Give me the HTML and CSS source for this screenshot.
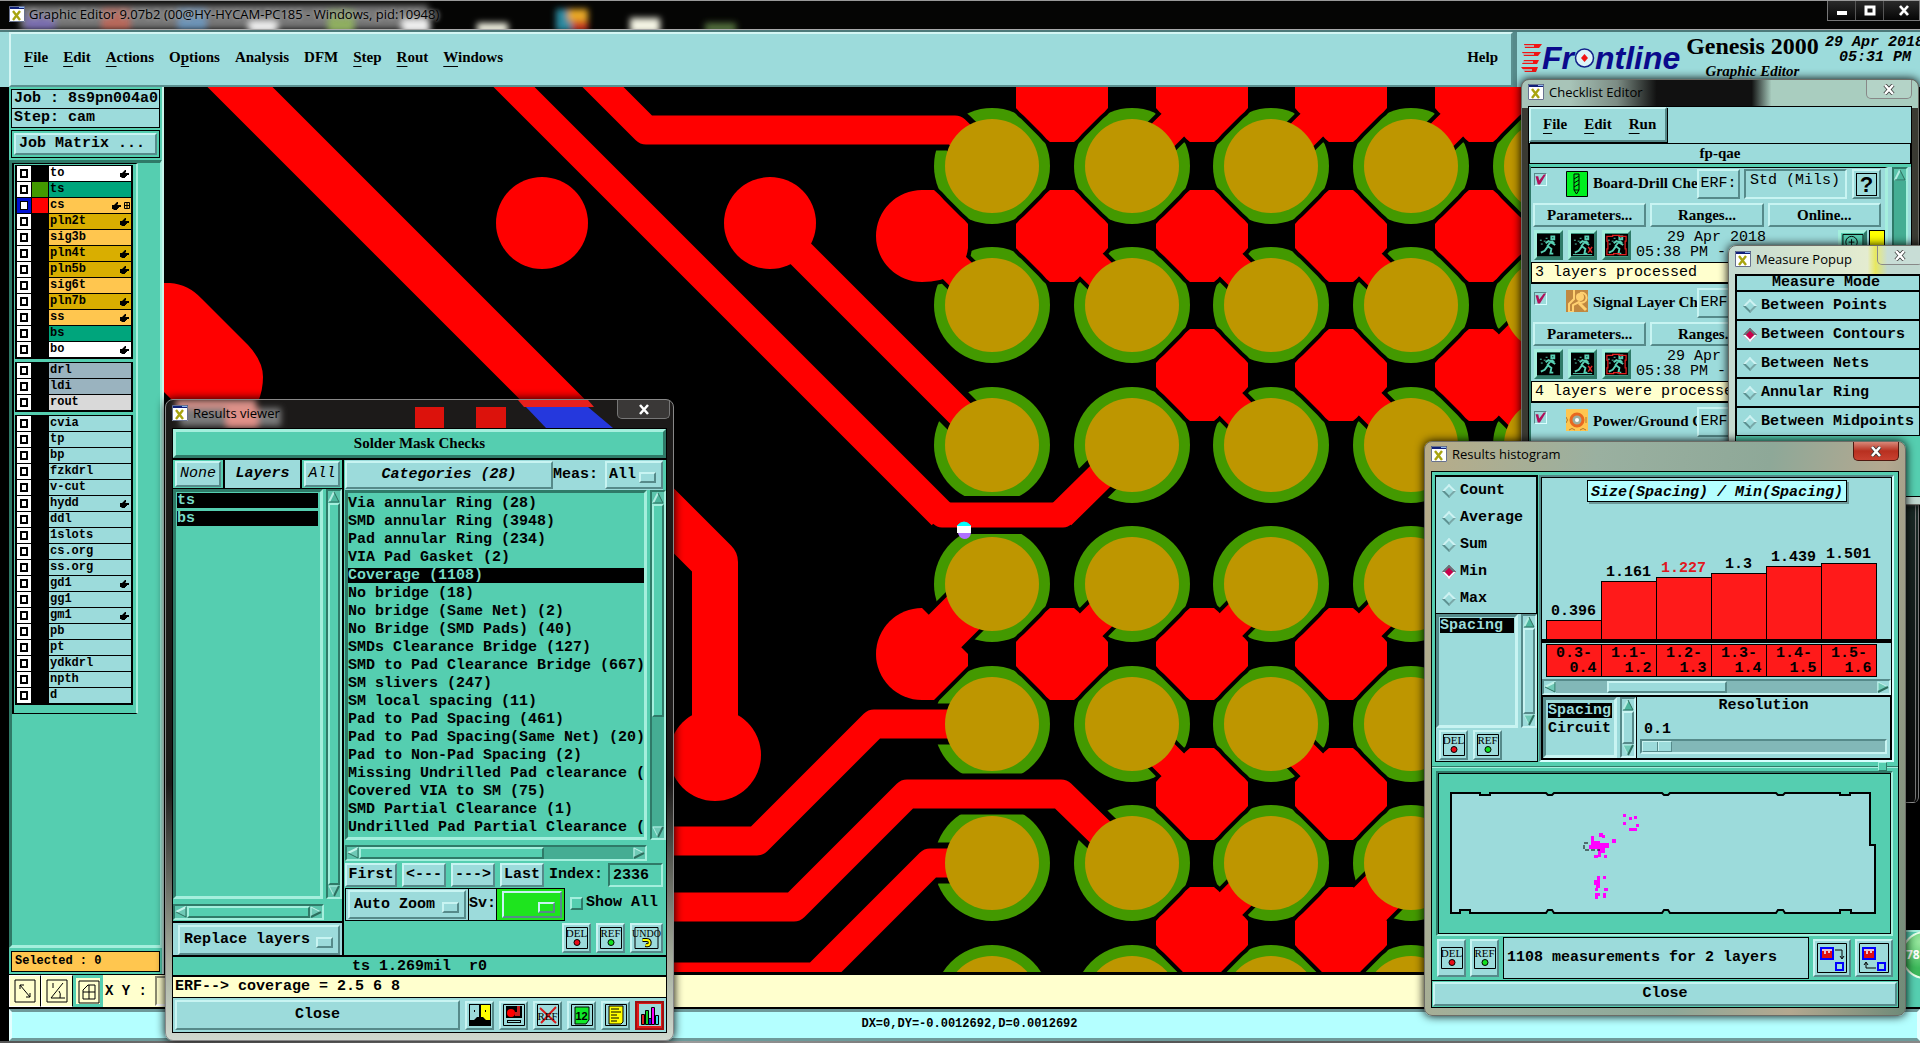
FILE: index.html
```html
<!DOCTYPE html>
<html lang="en">
<head>
<meta charset="utf-8">
<title>Graphic Editor 9.07b2</title>
<link rel="stylesheet" href="styles.css">
</head>
<body>
<svg class="defs" aria-hidden="true">
  <defs>
    <symbol id="up" viewBox="0 0 12 12"><path d="M6 1L11 11H1Z" fill="#4db69d"/><path d="M6 1L1 11" stroke="#b4ede2" stroke-width="2"/><path d="M6 1L11 11H1" fill="none" stroke="#2d6e5e" stroke-width="1"/></symbol>
    <symbol id="down" viewBox="0 0 12 12"><path d="M6 11L11 1H1Z" fill="#6fc9b6"/><path d="M6 11L1 1H11" fill="none" stroke="#b4ede2" stroke-width="1"/><path d="M6 11L11 1" stroke="#2d6e5e" stroke-width="2"/></symbol>
    <symbol id="left" viewBox="0 0 12 12"><path d="M1 6L11 1V11Z" fill="#6fc9b6"/><path d="M1 6L11 1" stroke="#c4f3ea" stroke-width="2"/><path d="M1 6L11 11V1" fill="none" stroke="#2d6e5e" stroke-width="1"/></symbol>
    <symbol id="right" viewBox="0 0 12 12"><path d="M11 6L1 1V11Z" fill="#6fc9b6"/><path d="M1 11V1L11 6" fill="none" stroke="#c4f3ea" stroke-width="1"/><path d="M11 6L1 11" stroke="#2d6e5e" stroke-width="2"/></symbol>
    <symbol id="hand" viewBox="0 0 9 8"><path d="M0 3H2L5 0H6V2L5 3H9V5H7V6H6V7H5V8H2L1 7H0Z"/></symbol>
    <symbol id="xwin" viewBox="0 0 16 16"><path d="M0 0H16V16H0Z" fill="#fff"/><path d="M0 0H16V3H0Z" fill="#10207a"/><path d="M10 1H15V2H10Z" fill="#8ab4f0"/><path d="M4 5L11 14M11 5L4 14" stroke="#a8a410" stroke-width="2.4"/><path d="M.5 .5H15.5V15.5H.5Z" fill="none" stroke="#68728f"/></symbol>
    <symbol id="close" viewBox="0 0 12 11"><path d="M2 1L10 10M10 1L2 10" stroke="#333" stroke-width="4"/><path d="M2 1L10 10M10 1L2 10" stroke="#fff" stroke-width="2.6"/></symbol>
    <symbol id="del" viewBox="0 0 22 22"><path d="M.5 .5H21.5V21.5H.5Z" fill="none" stroke="#000"/><circle cx="11" cy="15.500" r="3" fill="#e80c18" stroke="#000"/></symbol>
    <symbol id="ref" viewBox="0 0 22 22"><path d="M.5 .5H21.5V21.5H.5Z" fill="none" stroke="#000"/><circle cx="11" cy="15.500" r="3" fill="#12e020" stroke="#000"/></symbol>
    <symbol id="run" viewBox="0 0 24 24"><path d="M0 0H24V24H0Z" fill="#000"/><g fill="none" stroke="#58d0b4" stroke-width="2"><path d="M15 3h3v3h-3zM15 8L11 13L15 16L14 21H17M11 14L8 18L4 20M9 10L12 8L16 10L19 12M15 8L18 10"/><path d="M3 7h2M7 8h2M4 11h2M9 5h2" stroke-width="1"/></g></symbol>
    <symbol id="runx" viewBox="0 0 24 24"><use href="#run"/><path d="M18 14L22 20M22 14L18 20" stroke="#e02828" stroke-width="1.500"/><path d="M2 22H22" stroke="#58d0b4"/></symbol>
    <symbol id="runb" viewBox="0 0 24 24"><use href="#run"/><path d="M2 3H8V2H15V3H22V8H21V16H22V22H15V21H9V22H2V16H3V8H2Z" fill="none" stroke="#e02020" stroke-width="1.300"/></symbol>
    <g id="gp"><circle r="58"/></g>
    <path id="o" d="M-12 -46H12Q16 -43 20 -38L38 -20Q43 -16 46 -12V12Q43 16 38 20L20 38Q16 43 12 46H-12Q-16 43 -20 38L-38 20Q-43 16 -46 12V-12Q-43 -16 -38 -20L-20 -38Q-16 -43 -12 -46Z"/>
    <path id="h" d="M12 -46Q18 -41 22 -36L38 -20Q43 -16 46 -12V12Q42 46 0 46A46 46 0 0 1 0 -46Z"/>
    <path id="h2" d="M46 0V12L12 46H0A46 46 0 0 1 0 -46Z"/>
    <filter id="soft" x="-20%" y="-40%" width="140%" height="180%"><feGaussianBlur stdDeviation="3"/></filter>
  </defs>
</svg>

<main class="app">
  <header class="titlebar">
    <svg class="haze" viewBox="0 0 1920 29" preserveAspectRatio="xMinYMin slice" aria-hidden="true"><g filter="url(#soft)">
      <path d="M20 4H428V28H20Z" fill="#777"/><path d="M25 14H55V29H25Z" fill="#7c6fb0"/><path d="M102 8H130V29H102Z" fill="#b8695c"/><path d="M178 8H206V29H178Z" fill="#6d94b8"/><path d="M249 20H277V32H249Z" fill="#eee"/><path d="M328 10H354V32H328Z" fill="#8fae60"/><path d="M402 18H430V32H402Z" fill="#eee"/><path d="M477 22H508V32H477Z" fill="#f4f4e4"/><path d="M556 8H572V30H556Z" fill="#2a8aa0"/><path d="M568 8H588V20H568Z" fill="#e8a828"/><path d="M572 20H588V30H572Z" fill="#c83a20"/><path d="M630 17H660V32H630Z" fill="#f4f4e4"/><path d="M705 22H736V32H705Z" fill="#52703c"/></g></svg>
    <svg class="xicon"><use href="#xwin"/></svg>
    <h1>Graphic Editor 9.07b2 (00@HY-HYCAM-PC185 - Windows, pid:10948)</h1>
    <div class="winbtns">
      <button aria-label="Minimize"><svg width="12" height="11"><path d="M1 6H11V10H1Z" fill="#fff"/></svg></button>
      <button aria-label="Maximize"><svg width="12" height="11"><path d="M2 2H10V9H2Z" fill="none" stroke="#fff" stroke-width="3"/></svg></button>
      <button aria-label="Close"><svg width="12" height="11"><use href="#close"/></svg></button>
    </div>
  </header>

  <div class="topbar">
    <nav class="menubar">
      <button><u>F</u>ile</button><button><u>E</u>dit</button><button><u>A</u>ctions</button><button>O<u>p</u>tions</button><button>Analysis</button><button>DFM</button><button><u>S</u>tep</button><button><u>R</u>out</button><button><u>W</u>indows</button><button class="help">Help</button>
    </nav>
    <div class="brand">
      <div class="logo">
        <svg width="21" height="30" viewBox="0 0 21 30"><path d="M3 1H21L18 5H4ZM1 9H20L17 13H3ZM3 17H18L16 21H1ZM0 24H17L15 29H4Z" fill="#f01414"/><path d="M0 3H13M0 11H13M0 19H12M0 27H11" stroke="#9cdbdb" stroke-width="1.500"/></svg>
        <span>Fr</span>
        <svg width="21" height="23" viewBox="0 0 21 23"><circle cx="10.500" cy="12" r="9" fill="#dcf4f8" stroke="#12208a" stroke-width="1.500"/><path d="M10.500 8L14 12L10.500 16L7 12Z" fill="#f01414"/></svg>
        <span>ntline</span>
      </div>
      <div class="product"><strong>Genesis 2000</strong><em>Graphic Editor</em></div>
      <div class="clock"><span>29 Apr 2018</span><span>05:31 PM</span></div>
    </div>
  </div>

  <div class="work">
    <aside class="side">
      <div class="jobinfo"><p>Job : 8s9pn004a0</p><p>Step: cam</p></div>
      <div class="jobbtn"><button class="bv">Job Matrix ...</button></div>
      <div class="layerpane">
        <div class="layers">
          <div class="grp">
            <label class="wh"><input type="checkbox"><i></i><span>to</span><svg><use href="#hand"/></svg></label>
            <label class="gr"><input type="checkbox"><i class="green"></i><span>ts</span></label>
            <label class="or"><input type="checkbox" class="cur"><i class="red"></i><span>cs</span><svg><use href="#hand"/></svg><svg class="tiny" viewBox="0 0 6 7"><path d="M.5 .5H5.500V6.500H.5ZM3 0V7M0 3.500H6" fill="none" stroke="#000"/></svg></label>
            <label class="go"><input type="checkbox"><i></i><span>pln2t</span><svg><use href="#hand"/></svg></label>
            <label class="or"><input type="checkbox"><i></i><span>sig3b</span></label>
            <label class="go"><input type="checkbox"><i></i><span>pln4t</span><svg><use href="#hand"/></svg></label>
            <label class="go"><input type="checkbox"><i></i><span>pln5b</span><svg><use href="#hand"/></svg></label>
            <label class="or"><input type="checkbox"><i></i><span>sig6t</span></label>
            <label class="go"><input type="checkbox"><i></i><span>pln7b</span><svg><use href="#hand"/></svg></label>
            <label class="or"><input type="checkbox"><i></i><span>ss</span><svg><use href="#hand"/></svg></label>
            <label class="gr"><input type="checkbox"><i></i><span>bs</span></label>
            <label class="wh"><input type="checkbox"><i></i><span>bo</span><svg><use href="#hand"/></svg></label>
          </div>
          <div class="grp">
            <label class="sl"><input type="checkbox"><i></i><span>drl</span></label>
            <label class="sl"><input type="checkbox"><i></i><span>ldi</span></label>
            <label class="ro"><input type="checkbox"><i></i><span>rout</span></label>
          </div>
          <div class="grp">
            <label><input type="checkbox"><i></i><span>cvia</span></label>
            <label><input type="checkbox"><i></i><span>tp</span></label>
            <label><input type="checkbox"><i></i><span>bp</span></label>
            <label><input type="checkbox"><i></i><span>fzkdrl</span></label>
            <label><input type="checkbox"><i></i><span>v-cut</span></label>
            <label><input type="checkbox"><i></i><span>hydd</span><svg><use href="#hand"/></svg></label>
            <label><input type="checkbox"><i></i><span>ddl</span></label>
            <label><input type="checkbox"><i></i><span>1slots</span></label>
            <label><input type="checkbox"><i></i><span>cs.org</span></label>
            <label><input type="checkbox"><i></i><span>ss.org</span></label>
            <label><input type="checkbox"><i></i><span>gd1</span><svg><use href="#hand"/></svg></label>
            <label><input type="checkbox"><i></i><span>gg1</span></label>
            <label><input type="checkbox"><i></i><span>gm1</span><svg><use href="#hand"/></svg></label>
            <label><input type="checkbox"><i></i><span>pb</span></label>
            <label><input type="checkbox"><i></i><span>pt</span></label>
            <label><input type="checkbox"><i></i><span>ydkdrl</span></label>
            <label><input type="checkbox"><i></i><span>npth</span></label>
            <label><input type="checkbox"><i></i><span>d</span></label>
          </div>
        </div>
      </div>
      <p class="selected">Selected : 0</p>
    </aside>

    <div class="canvas">
      <svg viewBox="164 87 1756 886" preserveAspectRatio="xMinYMin slice" role="img" aria-label="Board artwork">
        <g fill="#439900">
          <use href="#gp" x="992" y="166"/><use href="#gp" x="1132" y="166"/><use href="#gp" x="1271" y="166"/><use href="#gp" x="1411" y="166"/><use href="#gp" x="1551" y="166"/>
          <use href="#gp" x="992" y="305"/><use href="#gp" x="1132" y="305"/><use href="#gp" x="1271" y="305"/><use href="#gp" x="1411" y="305"/><use href="#gp" x="1551" y="305"/>
          <use href="#gp" x="992" y="445"/><use href="#gp" x="1132" y="445"/><use href="#gp" x="1271" y="445"/><use href="#gp" x="1411" y="445"/><use href="#gp" x="1551" y="445"/>
          <use href="#gp" x="992" y="584"/><use href="#gp" x="1132" y="584"/><use href="#gp" x="1271" y="584"/><use href="#gp" x="1411" y="584"/>
          <use href="#gp" x="992" y="724"/><use href="#gp" x="1132" y="724"/><use href="#gp" x="1271" y="724"/><use href="#gp" x="1411" y="724"/>
          <use href="#gp" x="992" y="863"/><use href="#gp" x="1132" y="863"/><use href="#gp" x="1271" y="863"/><use href="#gp" x="1411" y="863"/>
          <use href="#gp" x="992" y="1003"/><use href="#gp" x="1132" y="1003"/><use href="#gp" x="1271" y="1003"/><use href="#gp" x="1411" y="1003"/>
        </g>
        <g fill="none" stroke="#000" stroke-linejoin="round">
          <path stroke-width="41" d="M603 87L646 130H955L992 166M770 223L992 445M514 87L942 515M1061 515L1132 445M640 841H757L874 724H980M640 907H794L907 794H1061L1132 863M640 977H816L930 863H980"/>
          <path stroke-width="38" d="M942 515H1063"/>
          <path stroke-width="40" d="M1202 96L1132 166M1341 96L1271 166M1481 96L1411 166M922 236L992 305M1062 236L1132 305M1202 236L1271 305M1341 236L1411 305M1202 375L1271 445M1341 375L1411 445M1481 375L1551 305M1481 375L1551 445M1062 654L1132 584M1202 654L1271 584M1341 654L1411 584M1202 794L1132 724M1341 794L1271 724M1202 933L1271 863"/>
          <path stroke-width="54" d="M922 654L992 584M1341 933L1411 863"/>
          <g fill="#000" stroke-width="8">
            <use href="#o" x="1062" y="96"/><use href="#o" x="1202" y="96"/><use href="#o" x="1341" y="96"/><use href="#o" x="1481" y="96"/>
            <use href="#h" x="922" y="236"/><use href="#o" x="1062" y="236"/><use href="#o" x="1202" y="236"/><use href="#o" x="1341" y="236"/><use href="#o" x="1481" y="236"/>
            <use href="#o" x="1202" y="375"/><use href="#o" x="1341" y="375"/><use href="#o" x="1481" y="375"/>
            <use href="#h2" x="922" y="654"/><use href="#o" x="1062" y="654"/><use href="#o" x="1202" y="654"/><use href="#o" x="1341" y="654"/>
            <use href="#o" x="1202" y="794"/><use href="#o" x="1341" y="794"/><use href="#o" x="1202" y="933"/><use href="#o" x="1341" y="933"/>
          </g>
        </g>
        <g fill="none" stroke="#f00" stroke-linejoin="round">
          <path stroke-width="29" d="M603 87L646 130H955L992 166M583 67L603 87M770 223L992 445M494 67L942 515M1061 515L1132 445M640 841H757L874 724H992M640 907H794L907 794H1061L1132 863M640 977H816L930 863H992"/>
          <path stroke-width="25" stroke-linecap="round" d="M942 515H1063"/>
          <path stroke-width="46" d="M220 67L715 562V754"/>
          <path stroke-width="32" d="M1202 96L1132 166M1341 96L1271 166M1481 96L1411 166M922 236L992 305M1062 236L1132 305M1202 236L1271 305M1341 236L1411 305M1202 375L1271 445M1341 375L1411 445M1481 375L1551 305M1481 375L1551 445M1062 654L1132 584M1202 654L1271 584M1341 654L1411 584M1202 794L1132 724M1341 794L1271 724M1202 933L1271 863"/>
          <path stroke-width="46" d="M922 654L992 584M1341 933L1411 863"/>
        </g>
        <g fill="#f00">
          <circle cx="542" cy="223" r="46"/><circle cx="770" cy="223" r="46"/><circle cx="715" cy="755" r="46"/>
          <path d="M164 283H170Q188 284 202 299L248 345Q263 361 263 377Q263 390 258 402V430H202L164 392Z"/>
          <use href="#o" x="1062" y="96"/><use href="#o" x="1202" y="96"/><use href="#o" x="1341" y="96"/><use href="#o" x="1481" y="96"/>
          <use href="#h" x="922" y="236"/><use href="#o" x="1062" y="236"/><use href="#o" x="1202" y="236"/><use href="#o" x="1341" y="236"/><use href="#o" x="1481" y="236"/>
          <use href="#o" x="1202" y="375"/><use href="#o" x="1341" y="375"/><use href="#o" x="1481" y="375"/>
          <use href="#h2" x="922" y="654"/><use href="#o" x="1062" y="654"/><use href="#o" x="1202" y="654"/><use href="#o" x="1341" y="654"/>
          <use href="#o" x="1202" y="794"/><use href="#o" x="1341" y="794"/><use href="#o" x="1202" y="933"/><use href="#o" x="1341" y="933"/>
        </g>
        <g fill="#be9600">
          <g id="golds"><circle cx="992" cy="166" r="47"/><circle cx="1132" cy="166" r="47"/><circle cx="1271" cy="166" r="47"/><circle cx="1411" cy="166" r="47"/><circle cx="1551" cy="166" r="47"/></g>
          <use href="#golds" y="139"/><use href="#golds" y="279"/><use href="#golds" y="418"/><use href="#golds" y="558"/><use href="#golds" y="697"/><use href="#golds" y="837"/>
        </g>
        <path d="M957 526Q964 518 971 526Z" fill="#0ff" stroke="#0ff"/><path d="M957 526H971V533H957Z" fill="#fff"/><path d="M958 533H971Q970 539 964 539Q959 538 958 533Z" fill="#b070ff"/>
      </svg>
    </div>
  </div>

  <footer class="toolbar">
    <button class="cbtn" aria-label="Scale"><svg width="22" height="24" viewBox="0 0 22 24"><path d="M1 1H21V23H1ZM6 6L16 18M6 10V6H10M16 14V18H12" fill="none" stroke="#000"/></svg></button>
    <button class="cbtn" aria-label="Angle"><svg width="22" height="24" viewBox="0 0 22 24"><path d="M1 1H21V23H1ZM5 19L17 4M5 19H19M7 4V9M13 12Q15 14 14 19" fill="none" stroke="#000"/></svg></button>
    <button class="cbtn on" aria-label="Grid"><svg width="22" height="24" viewBox="0 0 22 24"><path d="M1 1H21V23H1ZM5 19V10L10 5H17V19ZM5 12H17M11 5V19" fill="none" stroke="#000"/></svg></button>
    <label class="xy">X Y : <input type="text" aria-label="X Y coordinates"></label>
  </footer>
  <div class="status">DX=0,DY=-0.0012692,D=0.0012692</div>
  <div class="taskbar"></div>
</main>

<div class="rightwin"></div>
<div class="rightbar"></div>
<div class="gauge">78</div>

<section class="window checklist">
  <header><svg class="xicon"><use href="#xwin"/></svg><h2>Checklist Editor</h2><button class="x" aria-label="Close"><svg width="12" height="11"><use href="#close"/></svg></button></header>
  <div class="body">
    <div class="cmenu"><nav class="bv"><button><u>F</u>ile</button><button><u>E</u>dit</button><button><u>R</u>un</button></nav></div>
    <h3>fp-qae</h3>
    <div class="cframe">
      <div class="clist">
        <article>
          <div class="c1"><input type="checkbox" checked aria-label="Board-Drill Checks"><svg width="22" height="26" viewBox="0 0 22 26"><path d="M.5 .5H21.500V25.500H.5Z" fill="#00f020" stroke="#000"/><path d="M8 3H13V19L10.500 23L8 19ZM8 8L13 5M8 12L13 9M8 16L13 13M8 19H13" fill="none" stroke="#000"/></svg><b>Board-Drill Che</b><button class="bv erf">ERF:</button><input class="std" type="text" value="Std (Mils)" aria-label="ERF model"><button class="bv qm" aria-label="Help"><span>?</span></button></div>
          <div class="c2"><button class="bv">Parameters...</button><button class="bv">Ranges...</button><button class="bv">Online...</button></div>
          <div class="c3"><button aria-label="Run"><svg><use href="#run"/></svg></button><button aria-label="Run marked"><svg><use href="#runx"/></svg></button><button aria-label="Run profile"><svg><use href="#runb"/></svg></button><p>29 Apr 2018<br>05:38 PM -</p><button class="zm" aria-label="Zoom"><svg viewBox="0 0 24 24"><path d="M2 1H23V23H2Z" fill="none" stroke="#000"/><circle cx="11" cy="9" r="6" fill="none" stroke="#000"/><path d="M8 9H14M11 6V12" stroke="#000"/></svg></button><i class="yl"></i></div>
          <p class="msg">3 layers processed</p>
        </article>
        <article>
          <div class="c1"><input type="checkbox" checked aria-label="Signal Layer Checks"><svg width="22" height="22" viewBox="0 0 22 22"><path d="M0 0H22V22H0Z" fill="#c08840"/><path d="M14 3A5 5 0 1 1 13 12L7 15V22H3V14L8 9V0" fill="none" stroke="#ffd070" stroke-width="2"/><circle cx="14" cy="7" r="4" fill="#ffd070"/><path d="M13 13L20 20" stroke="#ffd070" stroke-width="3"/></svg><b>Signal Layer Ch</b><button class="bv erf">ERF:</button></div>
          <div class="c2"><button class="bv">Parameters...</button><button class="bv">Ranges...</button></div>
          <div class="c3"><button aria-label="Run"><svg><use href="#run"/></svg></button><button aria-label="Run marked"><svg><use href="#runx"/></svg></button><button aria-label="Run profile"><svg><use href="#runb"/></svg></button><p>29 Apr<br>05:38 PM -</p></div>
          <p class="msg">4 layers were processed</p>
        </article>
        <article>
          <div class="c1"><input type="checkbox" checked aria-label="Power/Ground Checks"><svg width="22" height="22" viewBox="0 0 22 22"><path d="M0 0H22V22H0Z" fill="#ffc64f"/><circle cx="11" cy="11" r="6" fill="#9cb0a0" stroke="#e86820" stroke-width="3"/><circle cx="11" cy="11" r="2" fill="#fff"/><path d="M0 8Q3 11 0 14M20 8V14M3 21Q6 18 9 21M14 21Q17 18 20 21" fill="none" stroke="#b07830"/></svg><b>Power/Ground C</b><button class="bv erf">ERF:</button></div>
        </article>
      </div>
      <div class="vsb"><svg><use href="#up"/></svg><i class="track"></i></div>
    </div>
  </div>
</section>

<section class="window measure">
  <header><svg class="xicon"><use href="#xwin"/></svg><h2>Measure Popup</h2><button class="x" aria-label="Close"><svg width="12" height="11"><use href="#close"/></svg></button></header>
  <div class="body">
    <h3>Measure Mode</h3>
    <label><input type="radio" name="mm">Between Points</label>
    <label><input type="radio" name="mm" checked>Between Contours</label>
    <label><input type="radio" name="mm">Between Nets</label>
    <label><input type="radio" name="mm">Annular Ring</label>
    <label><input type="radio" name="mm">Between Midpoints</label>
  </div>
</section>

<section class="window viewer">
  <header>
    <svg class="haze" viewBox="0 0 509 28" preserveAspectRatio="xMinYMin slice" aria-hidden="true"><g filter="url(#soft)"><path d="M10 0H90V10H10Z" fill="#d89088"/><path d="M14 8H115V26H14Z" fill="#7a7a7a"/><path d="M60 8H92V28H60Z" fill="#e09088"/></g><path d="M249 7H278V28H249ZM310 7H340V28H310Z" fill="#dc120c"/><path d="M352 0H422L428 7H358Z" fill="#e8201c"/><path d="M360 7H422L447 28H380Z" fill="#2538dd"/></svg>
    <svg class="xicon"><use href="#xwin"/></svg><h2>Results viewer</h2><button class="x" aria-label="Close"><svg width="12" height="11"><use href="#close"/></svg></button>
  </header>
  <div class="body">
    <h3 class="bv">Solder Mask Checks</h3>
    <div class="panes">
      <div class="lpane">
        <div class="tabs"><button class="bv">None</button><strong>Layers</strong><button class="bv">All</button></div>
        <div class="scroll">
          <ul class="list"><li class="sel">ts</li><li class="sel">bs</li></ul>
          <div class="vsb"><svg><use href="#up"/></svg><i class="thumb"></i><svg><use href="#down"/></svg></div>
        </div>
        <div class="hsb"><svg><use href="#left"/></svg><i class="thumb"></i><svg><use href="#right"/></svg></div>
        <div class="replace"><span class="opt bv"><select aria-label="Layer display"><option>Replace layers</option></select></span></div>
      </div>
      <div class="rpane">
        <div class="cats"><button class="bv">Categories (28)</button><label for="meas">Meas:</label><span class="opt bv"><select id="meas"><option>All</option></select></span></div>
        <div class="scroll">
          <ul class="list">
            <li>Via annular Ring (28)</li>
            <li>SMD annular Ring (3948)</li>
            <li>Pad annular Ring (234)</li>
            <li>VIA Pad Gasket (2)</li>
            <li class="sel">Coverage (1108)</li>
            <li>No bridge (18)</li>
            <li>No bridge (Same Net) (2)</li>
            <li>No Bridge (SMD Pads) (40)</li>
            <li>SMDs Clearance Bridge (127)</li>
            <li>SMD to Pad Clearance Bridge (667)</li>
            <li>SM slivers (247)</li>
            <li>SM local spacing (11)</li>
            <li>Pad to Pad Spacing (461)</li>
            <li>Pad to Pad Spacing(Same Net) (20)</li>
            <li>Pad to Non-Pad Spacing (2)</li>
            <li>Missing Undrilled Pad clearance (</li>
            <li>Covered VIA to SM (75)</li>
            <li>SMD Partial Clearance (1)</li>
            <li>Undrilled Pad Partial Clearance (</li>
          </ul>
          <div class="vsb"><svg><use href="#up"/></svg><i class="thumb"></i><i class="track"></i><svg><use href="#down"/></svg></div>
        </div>
        <div class="hsb"><svg><use href="#left"/></svg><i class="thumb"></i><i class="track"></i><svg><use href="#right"/></svg></div>
        <div class="nav"><button class="bv">First</button><button class="bv">&lt;---</button><button class="bv">---&gt;</button><button class="bv">Last</button><label for="idx">Index:</label><input id="idx" type="text" value="2336"></div>
        <div class="zoomrow"><span class="zbox"><span class="opt bv"><select aria-label="Zoom mode"><option>Auto Zoom</option></select></span></span><label for="sv">Sv:</label><span class="svbox"><span class="opt bv"><select id="sv"><option></option></select></span></span><label class="showall"><input type="checkbox">Show All</label></div>
        <div class="acts"><button class="bv ib"><svg><use href="#del"/></svg><span>DEL</span></button><button class="bv ib"><svg><use href="#ref"/></svg><span>REF</span></button><button class="bv ib undo"><svg viewBox="0 0 24 22"><path d="M.5 .5H23.500V21.500H.5Z" fill="none" stroke="#000"/><path d="M8 13H12Q16 13 15 17Q14 19 11 18" fill="none" stroke="#000" stroke-width="4"/><path d="M8 13H12Q16 13 15 17Q14 19 11 18" fill="none" stroke="#ff0" stroke-width="2"/></svg><span>UNDO</span></button></div>
      </div>
    </div>
    <p class="info">ts 1.269mil&nbsp; r0</p>
    <p class="erfline">ERF--&gt; coverage = 2.5 6 8</p>
    <div class="closerow">
      <button class="bv main">Close</button>
      <button class="bv ib" aria-label="Contrast"><svg viewBox="0 0 22 22"><path d="M0 0H22V22H0Z" fill="#000"/><path d="M1 1H10V13H8L5 16H1Z" fill="#9cdbdb"/><path d="M12 1H21V16H17L14 13H12Z" fill="#ff0"/><path d="M5 6H6V8H5ZM16 6H17V8H16Z" fill="#000"/></svg></button>
      <button class="bv ib" aria-label="Report"><svg viewBox="0 0 22 22"><path d="M.5 .5H21.500V21.500H.5Z" fill="#9cdbdb" stroke="#000"/><path d="M3 2H19V14H3ZM4 16H18V19H4Z" fill="#000"/><path d="M5 17H17V18H5Z" fill="#9cdbdb"/><circle cx="8" cy="9" r="4" fill="#f00"/><path d="M12 8V12H17V2H14V8Z" fill="#c82020"/></svg></button>
      <button class="bv ib" aria-label="Clear reference"><svg viewBox="0 0 22 22"><path d="M.5 .5H21.500V21.500H.5Z" fill="none" stroke="#000"/><path d="M3 4L19 19M19 3L4 19" stroke="#d81818" stroke-width="2"/></svg><span class="mid">REF</span></button>
      <button class="bv ib" aria-label="Count"><svg viewBox="0 0 22 22"><path d="M.5 .5H21.500V21.500H.5Z" fill="none" stroke="#000"/><path d="M4 3H18V16L15 20H4Z" fill="#10e828" stroke="#000"/></svg><span class="num">12</span></button>
      <button class="bv ib" aria-label="Notes"><svg viewBox="0 0 22 22"><path d="M.5 .5H21.500V21.500H.5Z" fill="none" stroke="#000"/><path d="M4 2H18V18L16 20H4Z" fill="#ff0" stroke="#000"/><path d="M6 5H14M6 8H16M6 11H12M6 14H14M6 17H12" stroke="#000"/></svg></button>
      <button class="bv ib hot" aria-label="Histogram"><svg viewBox="0 0 22 22"><path d="M0 0H22V22H0Z" fill="#9cdbdb"/><g stroke="#000"><path d="M2.500 10.500H5.500V20.500H2.500Z" fill="#e02020"/><path d="M6.500 6.500H9.500V20.500H6.500Z" fill="#10d020"/><path d="M9.500 14.500H12.500V20.500H9.500Z" fill="#2020e0"/><path d="M12.500 3.500H15.500V20.500H12.500Z" fill="#f0f"/><path d="M16.500 11.500H19.500V20.500H16.500Z" fill="#40e0f0"/></g></svg></button>
    </div>
  </div>
</section>

<section class="window histo">
  <header><svg class="xicon"><use href="#xwin"/></svg><h2>Results histogram</h2><button class="x hotx" aria-label="Close"><svg width="12" height="11"><use href="#close"/></svg></button></header>
  <div class="body">
    <div class="hgrid">
      <div class="hleft">
        <div class="stats">
          <label><input type="radio" name="st">Count</label>
          <label><input type="radio" name="st">Average</label>
          <label><input type="radio" name="st">Sum</label>
          <label><input type="radio" name="st" checked>Min</label>
          <label><input type="radio" name="st">Max</label>
        </div>
        <div class="scroll">
          <ul class="list"><li class="sel">Spacing</li></ul>
          <div class="vsb"><svg><use href="#up"/></svg><i class="thumb"></i><svg><use href="#down"/></svg></div>
        </div>
        <div class="acts"><button class="bv ib"><svg><use href="#del"/></svg><span>DEL</span></button><button class="bv ib"><svg><use href="#ref"/></svg><span>REF</span></button></div>
      </div>
      <div class="hright">
        <div class="chart">
          <h3>Size(Spacing) / Min(Spacing)</h3>
          <div class="bars">
            <div><span>0.396</span><i style="height:19px"></i></div>
            <div><span>1.161</span><i style="height:58px"></i></div>
            <div class="now"><span>1.227</span><i style="height:62px"></i></div>
            <div><span>1.3</span><i style="height:66px"></i></div>
            <div><span>1.439</span><i style="height:73px"></i></div>
            <div><span>1.501</span><i style="height:76px"></i></div>
          </div>
          <div class="ranges"><span>0.3-<br>&nbsp; 0.4</span><span>1.1-<br>&nbsp; 1.2</span><span>1.2-<br>&nbsp; 1.3</span><span>1.3-<br>&nbsp; 1.4</span><span>1.4-<br>&nbsp; 1.5</span><span>1.5-<br>&nbsp; 1.6</span></div>
          <div class="hsb"><svg><use href="#left"/></svg><i class="track"></i><i class="thumb"></i><i class="track t2"></i><svg><use href="#right"/></svg></div>
        </div>
        <div class="hlow">
          <ul class="list"><li class="sel">Spacing</li><li>Circuit</li></ul>
          <div class="vsb"><svg><use href="#up"/></svg><i class="thumb"></i><svg><use href="#down"/></svg></div>
          <div class="reso"><label for="res">Resolution</label><output>0.1</output><input id="res" type="range" min="0" max="100" value="0"></div>
        </div>
      </div>
    </div>
    <div class="sash"><i></i></div>
    <div class="map">
      <svg width="428" height="124" viewBox="0 0 428 124" role="img" aria-label="Measurement map">
        <path d="M2 2H31V4H41V2H97L99 4H103L105 2H213L215 4H219L221 2H327L329 4H334L336 2H391V4H401V2H421V54H426V122H402V119H391V122H336L334 119H329L327 122H221L219 119H215L213 122H105L103 119H99L97 122H21V119H11V122H2Z" fill="#9cdbdb" stroke="#000" stroke-width="2"/>
        <path d="M174 23h3v3h-3zM180 26h3v3h-3zM185 25h3v3h-3zM174 31h3v3h-3zM187 33h3v3h-3zM180 37h8v3h-8zM150 42h4v4h-4zM153 44h3v3h-3zM163 48h4v4h-4zM142 45h3v5h6v2h9v5h-4v5h-4v4h-3v-8h-9v-4h2zM145 64h4v3h-4zM155 64h3v3h-3zM148 85h3v12h-4v-3h-2v-5h3zM154 85h3v3h-3zM146 97h3v3h-3zM155 97h4v3h-4zM146 102h5v3h-2v3h-3zM154 102h3v5h-3z" fill="#f0f"/>
        <path d="M139 52H135V59H151" fill="none" stroke="#000" stroke-dasharray="4 2"/>
      </svg>
    </div>
    <div class="mrow">
      <button class="bv ib"><svg><use href="#del"/></svg><span>DEL</span></button><button class="bv ib"><svg><use href="#ref"/></svg><span>REF</span></button>
      <p>1108 measurements for 2 layers</p>
      <button class="bv big" aria-label="Export"><svg width="30" height="30" viewBox="0 0 30 30"><path d="M.5 .5H29.500V29.500H.5Z" fill="none" stroke="#000"/><path d="M4 5H16V16H4Z" fill="#e8c0d0" stroke="#00f" stroke-width="2"/><path d="M5 15V8H7V11H9V8H11V10H13V8H15V15Z" fill="#e01010"/><path d="M19 20H26V27H19Z" fill="none" stroke="#00f" stroke-width="2"/><path d="M18 7H25V15M23 13L25 16L27 13" fill="none" stroke="#000"/></svg></button>
      <button class="bv big" aria-label="Import"><svg width="30" height="30" viewBox="0 0 30 30"><path d="M.5 .5H29.500V29.500H.5Z" fill="none" stroke="#000"/><path d="M4 5H16V16H4Z" fill="#e8c0d0" stroke="#00f" stroke-width="2"/><path d="M5 15V8H7V11H9V8H11V10H13V8H15V15Z" fill="#e01010"/><path d="M19 20H26V27H19Z" fill="none" stroke="#00f" stroke-width="2"/><path d="M17 25H7V20M5 22L7 19L9 22" fill="none" stroke="#000"/></svg></button>
    </div>
    <button class="bv hclose">Close</button>
  </div>
</section>
</body>
</html>
```
FILE: styles.css
```css
* { box-sizing: border-box; margin: 0; padding: 0; }
:root {
  --aqua: #9cdbdb;
  --teal: #55ceb0;
  --cream: #ffffce;
  --hi: #c8f4f2;
  --lo: #568a8a;
  --ghi: #a4efdd;
  --glo: #2f7a68;
  --mono: "Liberation Mono", monospace;
  --serif: "Liberation Serif", serif;
  --sans: "Open Sans", sans-serif;
}
html, body { height: 100%; }
body { background: #000; overflow: hidden; color: #000; font: 700 15px/18px var(--mono); position: relative; }
button, input, select, output { font: inherit; color: inherit; background: none; border: 0; border-radius: 0; }
button { cursor: pointer; white-space: nowrap; }
ul { list-style: none; }
svg { display: block; flex: none; }
.defs { position: absolute; width: 0; height: 0; }
h1, h2, h3 { font: inherit; }
.bv { border: 2px solid; border-color: var(--hi) var(--lo) var(--lo) var(--hi); background: var(--aqua); }

/* main window */
.app { display: grid; grid-template-rows: 30px 57px minmax(0, 1fr) 35px 32px 2px; height: 100%; }
.titlebar { position: relative; display: flex; align-items: center; padding: 0 0 2px 9px; border-top: 1px solid #999; border-bottom: 1px solid #aaa; background: #050504; }
.haze { position: absolute; left: 0; top: 0; width: 100%; height: 100%; }
.xicon { width: 16px; height: 16px; position: relative; }
.titlebar h1 { position: relative; flex: 1; font: 13px/18px var(--sans); padding-left: 4px; color: #000; text-shadow: 0 0 5px #aaa, 0 0 3px #999; }
.winbtns { position: relative; display: flex; align-self: start; border: 1px solid #777; border-top: 0; }
.winbtns button { width: 28px; height: 19px; display: grid; place-items: center; border-right: 1px solid #555; background: linear-gradient(#2a2a2a, #050505); }
.winbtns button:last-child { width: 35px; padding-left: 5px; border: 0; }
.topbar { display: grid; grid-template-columns: minmax(0, 1fr) 407px; padding-left: 9px; border-top: 2px solid #4d7a7a; background: var(--aqua); }
.menubar { display: flex; align-items: center; gap: 15px; padding: 0 13px 5px; border: 2px solid; border-color: #d4f6f4 #5a9090 #5a9090 #d4f6f4; font: 700 15px/20px var(--serif); }
.menubar .help { margin-left: auto; }
u { text-underline-offset: 4px; }
.brand { display: grid; grid-template-columns: 166px 139px 1fr; border-left: 4px solid var(--lo); white-space: nowrap; overflow: hidden; }
.logo { display: flex; align-items: center; padding: 0 0 4px 4px; color: #0a0a8c; font: italic 700 32px/36px "Liberation Sans", sans-serif; }
.product { display: flex; flex-direction: column; text-align: center; font-family: var(--serif); }
.product strong { font-size: 24px; line-height: 28px; }
.product em { font-size: 15px; line-height: 22px; font-weight: 700; }
.clock { display: flex; flex-direction: column; padding: 3px 0 0 3px; font-style: italic; line-height: 15px; }
.clock span + span { padding-left: 14px; }

.work { display: grid; grid-template-columns: 155px minmax(0, 1fr); padding-left: 9px; min-height: 0; }
.canvas { background: #000; overflow: hidden; min-height: 0; border-bottom: 2px solid #000; }
.canvas svg { width: 100%; height: 100%; }
.side { display: flex; flex-direction: column; background: var(--teal); border-right: 2px solid #c8f4ea; min-height: 0; padding-top: 2px; }
.jobinfo p { height: 20px; margin: 0 2px; border: 1px solid #000; background: var(--aqua); padding-left: 2px; white-space: nowrap; overflow: hidden; }
.jobinfo p + p { margin-top: -1px; }
.jobbtn { margin: 2px; padding: 2px; border: 1px solid #000; }
.jobbtn button { width: 100%; height: 22px; text-align: left; padding-left: 3px; line-height: 16px; display: block; }
.layerpane { flex: 1; min-height: 0; border: 3px solid; border-color: var(--glo) var(--ghi) var(--ghi) var(--glo); border-right-width: 2px; }
.layers { width: 126px; padding: 1px 6px 8px 1px; border: 1px solid #000; border-left-width: 2px; border-right: 2px solid var(--ghi); display: grid; gap: 3px; }
.grp { background: #000; padding: 1px 2px 0 2px; border-bottom: 1px solid #000; }
.grp label { display: grid; grid-template-columns: 14px 16px 82px; gap: 1px; height: 16px; position: relative; font-size: 12px; line-height: 15px; }
.grp label > input { appearance: none; width: 14px; height: 15px; background: #fff; border: 2px solid #fff; outline: 2px solid #000; outline-offset: -5px; }
.grp label > input.cur { border: 3px solid #0010d0; outline-offset: -4px; outline-width: 1px; }
.grp label > i, .grp label > span { height: 15px; }
.grp label > span { background: var(--aqua); padding-left: 1px; }
.grp label > svg { position: absolute; right: 2px; top: 4px; width: 9px; height: 8px; }
.grp .or > svg:nth-of-type(1):nth-last-of-type(2) { right: 10px; }
.grp label > svg.tiny { width: 6px; height: 7px; right: 1px; }
.green { background: #439900; } .red { background: #f00; }
.grp .wh > span { background: #fff; } .grp .gr > span { background: #00a57c; } .grp .or > span { background: #ffc64f; }
.grp .go > span { background: #d9ae00; } .grp .sl > span { background: #9ab3bf; } .grp .ro > span { background: #d9d9d9; }
.selected { margin: 3px 2px 2px; height: 21px; border: 1px solid #000; background: #ffc64f; font-size: 12px; line-height: 18px; padding-left: 3px; }

.toolbar { display: flex; margin-left: 9px; border-top: 1px solid #000; border-bottom: 2px solid #000; background: var(--cream); }
.cbtn { width: 32px; padding: 2px; display: grid; place-items: center; border: 1px solid; border-color: #fff #000 #fff #fff; }
.cbtn.on { width: 30px; border: 3px solid var(--teal); }
.xy { display: flex; align-items: center; gap: 8px; font-size: 14px; line-height: 18px; padding-left: 2px; }
.xy input { width: 200px; height: 30px; border: 2px solid; border-color: #8a8a70 #fff #fff #8a8a70; }
.status { margin-left: 9px; display: grid; place-items: center; padding-bottom: 3px; background: #b4ffff; border: 3px solid #e4ffff; border-top: 3px solid #6e9a9a; border-bottom-color: #6e9a9a; font-size: 12px; padding-left: 10px; }
.taskbar { background: linear-gradient(90deg, #555, #aaa 30%, #555 60%, #888); }
.rightwin { position: absolute; right: 1px; top: 440px; width: 60px; height: 363px; border: 1px solid #999; border-radius: 0 0 6px 6px; background: linear-gradient(#55ceb0 55px, #222 58px, #888 62px, #1a2a26 66px, #0a0a0a); border-right: 4px double #777; }
.rightbar { position: absolute; right: 0; top: 930px; width: 60px; height: 77px; background: var(--teal); border-top: 2px solid var(--ghi); }
.gauge { position: absolute; right: -29px; top: 931px; width: 48px; height: 48px; border-radius: 50%; border: 2px solid #e8ffe8; background: radial-gradient(circle at 40% 20%, #9be8a0, #3cb85a 60%); color: #fff; font: 700 12px/44px var(--sans); padding-left: 3px; }

/* floating windows */
.window { position: absolute; border: 1px solid #6c6c66; border-radius: 8px; box-shadow: 0 0 10px #000; display: flex; flex-direction: column; padding: 0 6px 7px 6px; }
.window > header { position: relative; display: flex; align-items: center; gap: 5px; flex: none; height: 28px; padding-bottom: 2px; }
.window > header h2 { position: relative; flex: 1; font: 13px/18px var(--sans); white-space: nowrap; }
.window .x { position: relative; align-self: start; width: 46px; height: 19px; display: grid; place-items: center; border: 1px solid #888; border-top: 0; border-radius: 0 0 5px 5px; background: #ffffff22; }
.window .body { flex: 1; min-height: 0; display: flex; flex-direction: column; border: 1px solid #000; overflow: hidden; }

.list { flex: 1; min-width: 0; overflow: hidden; border: 3px solid; border-color: var(--glo) var(--ghi) var(--ghi) var(--glo); padding: 1px 0 0 1px; }
.list li { height: 15px; line-height: 15px; margin: 0 2px 3px 0; overflow: hidden; white-space: pre; }
.list .sel { background: #000; color: #78dcc8; }
.scroll { flex: 1; min-height: 0; display: flex; gap: 3px; }
.vsb { width: 16px; flex: none; display: flex; flex-direction: column; border: 2px solid; border-color: var(--glo) var(--ghi) var(--ghi) var(--glo); background: #45ad93; }
.vsb svg, .hsb svg { width: 12px; height: 12px; background: #5cc4ac; }
.hsb { height: 16px; flex: none; display: flex; border: 2px solid; border-color: var(--glo) var(--ghi) var(--ghi) var(--glo); background: #45ad93; }
.thumb { flex: 1; border: 2px solid; border-color: var(--ghi) var(--glo) var(--glo) var(--ghi); background: var(--teal); }
.track { flex: 1; }
.opt { position: relative; display: block; }
.opt::after { content: ""; position: absolute; right: 5px; top: 50%; width: 13px; height: 7px; margin-top: -3px; border: 2px solid; border-color: var(--hi) var(--lo) var(--lo) var(--hi); pointer-events: none; }
.opt select { appearance: none; width: 100%; height: 100%; padding-left: 4px; }
.ib { width: 29px; height: 30px; position: relative; display: grid; place-items: center; }
.ib svg { width: 22px; height: 22px; }
.ib span { position: absolute; left: -2px; right: -2px; top: 3px; font: 400 11px/11px var(--serif); text-align: center; }
.ib span.mid { top: 8px; } .ib span.num { top: 7px; font: 700 11px/12px "Liberation Sans", sans-serif; }
.acts { display: flex; gap: 5px; }
.window input[type=radio] { appearance: none; width: 10px; height: 10px; margin: 0 6px 0 8px; transform: rotate(45deg); border: 2px solid; border-color: #cef2f2 #7aa8a8 #5c9090 #cef2f2; }
.window input[type=radio]:checked { background: #c8004b; border-color: #607878 #eaffff #eaffff #607878; }

/* results viewer */
.viewer { left: 165px; top: 399px; width: 509px; height: 642px; background: linear-gradient(#1c1a19 0 60%, #a8b0a0 88%, #cfd8cf); border-color: #888; }
.viewer > header .haze { left: -6px; width: 509px; height: 28px; }
.viewer > header .x { width: 53px; margin-right: -3px; border-color: #777; }
.viewer .body { background: var(--teal); }
.viewer h3 { flex: none; height: 29px; background: var(--teal); border-color: var(--ghi) var(--glo) var(--glo) var(--ghi); border-width: 3px; text-align: center; font: 700 15px/22px var(--serif); }
.panes { flex: 1; min-height: 0; display: grid; grid-template-columns: 171px minmax(0, 1fr); border-top: 2px solid #000; border-bottom: 2px solid #000; }
.lpane { display: flex; flex-direction: column; border-right: 2px solid #000; min-height: 0; }
.tabs { display: grid; grid-template-columns: 50px 1fr 40px; height: 29px; border-bottom: 1px solid #000; font-style: italic; text-align: center; background: var(--teal); flex: none; }
.tabs button { margin: 1px 2px; font-weight: 400; }
.tabs strong { background: var(--aqua); border: solid #000; border-width: 0 2px; line-height: 27px; }
.lpane .hsb { margin: 5px 18px 1px 0; }
.replace { height: 34px; padding: 2px 2px 2px 5px; border-top: 2px solid #000; background: var(--aqua); flex: none; }
.replace .opt { height: 30px; }
.rpane { display: flex; flex-direction: column; min-height: 0; padding: 0 3px 0 1px; }
.cats { display: grid; grid-template-columns: 208px 52px 1fr; height: 30px; align-items: center; background: var(--aqua); flex: none; }
.cats button { height: 28px; font-style: italic; } .cats .opt { height: 28px; }
.cats select { padding-left: 2px; }
.rpane .scroll { margin: 0 -3px 5px 0; }
.rpane .list { padding-top: 3px; padding-left: 0; }
.rpane .list li { margin-right: 0; }
.rpane .hsb { margin: 0 16px 1px 0; }
.rpane .vsb .thumb { flex: 200; } .rpane .vsb .track { flex: 105; }
.rpane .hsb .thumb { flex: 184; } .rpane .hsb .track { flex: 90; }
.nav { display: flex; gap: 5px; height: 26px; align-items: center; flex: none; }
.nav button { height: 24px; width: 44px; line-height: 18px; } .nav button:first-child { width: 52px; }
.nav input { flex: 1; min-width: 0; height: 24px; border: 2px solid; border-color: var(--glo) var(--ghi) var(--ghi) var(--glo); padding-left: 3px; }
.zoomrow { display: flex; height: 33px; align-items: stretch; flex: none; }
.zbox { width: 124px; padding: 1px 2px; border: 1px solid #000; background: var(--aqua); }
.zoomrow .opt { height: 100%; }
.zoomrow > label:not(.showall) { background: var(--aqua); line-height: 30px; border: solid #000; border-width: 1px 0; }
.svbox { width: 69px; padding: 2px 2px 2px 5px; background: #1ee41e; border: 1px solid #000; }
.svbox .opt { background: #1ee41e; }
.showall { display: flex; align-items: center; gap: 3px; padding: 0 0 3px 5px; }
.showall input { appearance: none; width: 13px; height: 13px; border: 2px solid; border-color: var(--ghi) var(--glo) var(--glo) var(--ghi); }
.rpane .acts { justify-content: flex-end; height: 34px; align-items: center; flex: none; }
.undo.ib { width: 33px; } .undo.ib svg { width: 25px; } .undo.ib span { font-size: 10px; }
.info { height: 20px; line-height: 19px; text-align: center; border-bottom: 2px solid #000; flex: none; }
.erfline { height: 21px; line-height: 19px; background: var(--cream); border-bottom: 1px solid #000; padding-left: 2px; flex: none; }
.closerow { display: flex; gap: 5px; padding: 2px; height: 34px; align-items: center; background: var(--aqua); flex: none; }
.closerow .main { flex: 1; height: 30px; } .closerow .ib { height: 29px; }
.ib.hot { background: #e01818; border-color: #a01010; }

/* checklist editor */
.checklist { left: 1521px; top: 79px; width: 398px; height: 420px; background: linear-gradient(90deg, #a8c4b8 0 12%, #7c8c84 24%, #111 34% 58%, #a9cdbf 63%); background-size: 100% 28px; background-color: #3a3a32; background-repeat: no-repeat; }
.checklist > header { height: 26px; }
.checklist .body { background: var(--aqua); }
.cmenu { height: 36px; flex: none; }
.cmenu nav { width: 138px; height: 35px; display: flex; gap: 17px; align-items: center; padding: 0 0 1px 12px; font: 700 15px/20px var(--serif); box-shadow: 1px 1px #000; }
.checklist h3 { height: 21px; flex: none; border: 1px solid #000; text-align: center; font: 700 15px/18px var(--serif); }
.cframe { display: flex; flex: 1; min-height: 0; border-top: 3px solid var(--teal); border-left: 2px solid var(--glo); }
.clist { flex: 1; min-width: 0; overflow: hidden; padding: 0 2px 0 0; border-top: 1px solid #000; border-right: 3px solid var(--ghi); background: var(--aqua); }
.clist article { height: 119px; }
.c1 { display: flex; height: 34px; align-items: flex-start; padding: 1px 0 0 3px; }
.c1 > * { flex: none; }
.c1 > svg { margin-top: 2px; }
.c1 input[type=checkbox] { appearance: none; width: 13px; height: 13px; margin: 4px 19px 0 0; border: 1px solid; border-color: #568a8a #d8ffff #d8ffff #568a8a; }
.c1 input[type=checkbox]:checked::before { content: ""; display: block; width: 11px; height: 11px; background: #b0105a; clip-path: polygon(5% 20%, 30% 20%, 38% 60%, 80% 5%, 100% 5%, 45% 95%, 25% 95%); }
.c1 b { width: 109px; padding: 4px 0 0 5px; overflow: hidden; white-space: nowrap; font: 700 15px/20px var(--serif); }
.erf { width: 43px; height: 30px; font-weight: 400; }
.std { width: 103px; height: 30px; margin-left: 4px; padding: 0 0 8px 4px; border: 2px solid; border-color: var(--lo) var(--hi) var(--hi) var(--lo); font-weight: 400; }
.qm { width: 29px; height: 30px; margin-left: 5px; display: grid; place-items: center; }
.qm span { width: 21px; height: 23px; border: 1px solid #000; font: 700 22px/21px "Liberation Sans", sans-serif; }
.c2 { display: grid; grid-template-columns: 1fr 1fr 1fr; gap: 4px; padding: 1px 2px; height: 26px; font: 700 15px/18px var(--serif); }
.c3 { display: flex; gap: 5px; height: 34px; padding: 2px 0 0 3px; font-weight: 400; }
.c3 > button { width: 29px; height: 30px; border: 3px solid; border-color: var(--ghi) var(--glo) var(--glo) var(--ghi); background: var(--teal); }
.c3 svg { width: 23px; height: 24px; }
.c3 p { width: 202px; flex: none; height: 30px; line-height: 15px; margin-right: -5px; text-indent: 31px; white-space: nowrap; }
.c3 .zm { flex: none; }
.yl { width: 16px; flex: none; background: #ff0; border: 1px solid #000; height: 32px; margin-left: -3px; }
.msg { height: 22px; padding-left: 3px; line-height: 19px; background: var(--cream); border: 1px solid #000; border-bottom-width: 2px; font-weight: 400; white-space: nowrap; }
.checklist .vsb { margin-right: 3px; margin-left: 4px; }

/* measure popup */
.measure { left: 1728px; top: 245px; width: 200px; height: 260px; background: linear-gradient(90deg, #c4dad0, #e4ecd0 70%, #e8e860 74%, #c0d8d0 80%); }
.measure > header .x { margin-right: -2px; }
.measure .body { background: var(--teal); }
.measure h3, .measure label { flex: none; background: var(--aqua); border: 1px solid #000; }
.measure h3 { height: 16px; line-height: 14px; text-align: center; padding-right: 4px; }
.measure label { height: 29px; display: flex; align-items: center; white-space: nowrap; }

/* results histogram */
.histo { left: 1424px; top: 441px; width: 482px; height: 575px; background: linear-gradient(100deg, #b8ac88, #9ab0a0 30%, #8ea898 60%, #b4a890 80%, #6e8a78); }
.histo > header { height: 29px; padding-bottom: 5px; }
.hotx.x { background: linear-gradient(#d88878, #b83020 50%, #c84030); border-color: #501810; }
.histo .body { --teal: #9cdbdb; --ghi: #c8f4f2; --glo: #568a8a; background: #55ceb0; }
.hgrid { display: grid; grid-template-columns: 103px minmax(0, 1fr); gap: 1px; height: 290px; padding: 3px 4px 0 3px; flex: none; }
.hleft { display: flex; flex-direction: column; border: 1px solid #000; background: var(--aqua); }
.stats { height: 138px; display: grid; grid-template-rows: repeat(5, 27px); border: solid #000; border-width: 1px 1px 1px 0; flex: none; }
.stats label { display: flex; align-items: center; }
.hleft .acts { padding: 2px 3px; height: 33px; }
.hleft .list li { margin-right: 1px; }
.histo .vsb, .histo .hsb { background: #82b8b8; }
.histo .vsb svg, .histo .hsb svg { background: var(--aqua); }
.histo .list .sel { color: #9cdbdb; }
.hright { border: 2px solid var(--lo); border-color: var(--lo) #d8ffff #d8ffff var(--lo); background: var(--aqua); display: flex; flex-direction: column; min-width: 0; }
.chart { flex: 1; display: flex; flex-direction: column; border: 1px solid #000; }
.chart h3 { align-self: center; margin: 2px 0 0 1px; height: 22px; line-height: 24px; padding: 0 3px; font-style: italic; background: #b4ffff; border: 1px solid #000; box-shadow: 2px 2px #6e9a9a; }
.bars { flex: 1; display: grid; grid-template-columns: repeat(6, 55px); align-items: end; padding-left: 4px; border-bottom: 4px solid #000; text-align: center; line-height: 16px; }
.bars i { display: block; background: #ff1a1a; border: 1px solid #000; border-bottom: 0; margin-right: -1px; }
.now span { color: #e01820; }
.ranges { display: grid; grid-template-columns: repeat(6, 55px); padding-left: 4px; margin: 1px 0 6px; height: 29px; line-height: 15px; text-align: center; }
.ranges span { background: #ff1a1a; border: 1px solid #000; margin-right: -1px; padding-top: 1px; }
.chart .hsb .t2 { flex: 154; } .chart .hsb .track:not(.t2) { flex: 52; } .chart .hsb .thumb { flex: 119; }
.hlow { height: 64px; display: flex; flex: none; border: 2px solid #000; border-top-width: 1px; }
.hlow .list { flex: none; width: 74px; padding: 3px 0 0 2px; }
.hlow .vsb { margin-left: 3px; }
.reso { flex: 1; min-width: 0; display: grid; grid-template-rows: 21px 20px 16px; border-left: 1px solid #000; text-align: center; padding: 0 3px; }
.reso output { text-align: left; padding-left: 4px; line-height: 24px; }
.reso input { appearance: none; width: 100%; height: 15px; background: #82b8b8; border: 2px solid; border-color: var(--lo) var(--hi) var(--hi) var(--lo); align-self: end; }
.reso input::-webkit-slider-thumb { appearance: none; width: 30px; height: 11px; background: linear-gradient(90deg, transparent 14px, #568a8a 14px 15px, #c8f4f2 15px 16px, transparent 16px), #9cdbdb; border: 1px solid; border-color: #c8f4f2 #568a8a #568a8a #c8f4f2; }
.sash { height: 9px; display: flex; justify-content: flex-end; align-items: center; flex: none; background: linear-gradient(#55ceb0 4px, #2f7a68 4px 5px, #a4efdd 5px 6px, #55ceb0 6px); }
.sash i { width: 9px; height: 9px; margin-right: 11px; background: #55ceb0; border: 1px solid; border-color: #a4efdd #2f7a68 #2f7a68 #a4efdd; }
.map { height: 165px; margin: 0 5px 0 4px; flex: none; border: 2px solid; border-color: #2f7a68 #a4efdd #a4efdd #2f7a68; outline: 1px solid #000; outline-offset: -3px; padding: 18px 0 0 11px; }
.mrow { display: flex; align-items: center; gap: 4px; padding: 0 5px; height: 45px; flex: none; border-bottom: 1px solid #000; }
.mrow .ib { height: 38px; } .mrow .ib span { top: 7px; }
.mrow p { flex: 1; height: 42px; line-height: 40px; border: 1px solid #000; background: var(--aqua); padding-left: 3px; }
.big { width: 38px; height: 38px; display: grid; place-items: center; }
.hclose { flex: 1; margin: 1px; }
```
